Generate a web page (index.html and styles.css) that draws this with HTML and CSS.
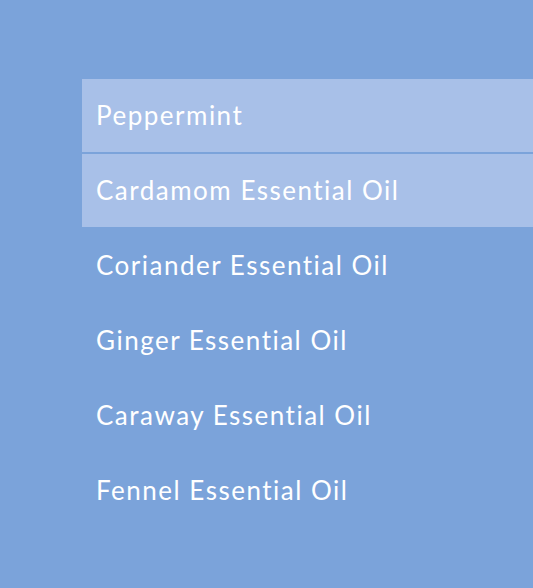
FILE: index.html
```html
<!DOCTYPE html>
<html lang="en">
<head>
  <meta charset="UTF-8">
  <title>Essential Oils</title>
  <link rel="stylesheet" href="styles.css">
</head>
<body>

<div class="oil-menu">
  <ul class="oil-list">
    <li class="oil-item active">Peppermint</li>
    <li class="oil-item active">Cardamom Essential Oil</li>
    <li class="oil-item">Coriander Essential Oil</li>
    <li class="oil-item">Ginger Essential Oil</li>
    <li class="oil-item">Caraway Essential Oil</li>
    <li class="oil-item">Fennel Essential Oil</li>
  </ul>
</div>

</body>
</html>
```
FILE: styles.css
```css
body {
  font-family: Lato, "Open Sans", sans-serif;
  background: #7ba3da;
  margin: 0;
}

.oil-menu {
  padding: 79px 0 0 82px;
}

.oil-list {
  list-style: none;
  margin: 0;
  padding: 0;
}

.oil-item {
  height: 73px;
  margin-bottom: 2px;
  padding: 0 0 2px 14px;
  box-sizing: border-box;
  display: flex;
  align-items: center;
  color: #fff;
  font-size: 26px;
  letter-spacing: 1.5px;
  font-variant-ligatures: none;
}

.oil-item.active {
  background: #a8c0e8;
}
```
